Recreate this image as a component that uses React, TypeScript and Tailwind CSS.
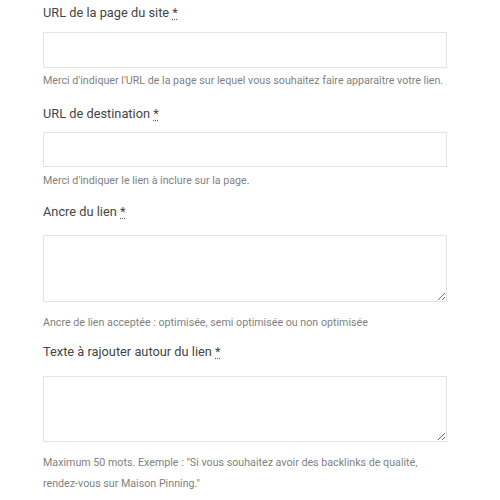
import React from "react";

function Label({ text }: { text: string }) {
  return (
    <div className="text-[12.8px] leading-[26px] text-[#454545]">
      {text}{" "}
      <abbr title="required" className="text-[#454545] underline decoration-dotted decoration-[#666] underline-offset-[2px]">*</abbr>
    </div>
  );
}

function Help({ children }: { children: React.ReactNode }) {
  return <div className="text-[10.7px] leading-[21px] text-[#7f7f7f]">{children}</div>;
}

export default function App() {
  return (
    <div className="w-[500px] h-[500px] bg-white overflow-hidden" style={{ fontFamily: "Roboto, 'Liberation Sans', sans-serif" }}>
      <div className="pl-[43px] pr-[53px]">
        <Label text="URL de la page du site" />
        <input className="mt-[6px] block w-full h-[36px] border border-[#e3e3e3] bg-white" />
        <div className="mt-[2px]"><Help>Merci d'indiquer l'URL de la page sur lequel vous souhaitez faire apparaître votre lien.</Help></div>
        <div className="mt-[10px]"><Label text="URL de destination" /></div>
        <input className="mt-[5px] block w-full h-[35px] border border-[#e3e3e3] bg-white" />
        <div className="mt-[3px]"><Help>Merci d'indiquer le lien à inclure sur la page.</Help></div>
        <div className="mt-[8px]"><Label text="Ancre du lien" /></div>
        <textarea className="mt-[10px] block w-full h-[67px] border border-[#e3e3e3] bg-white" />
        <div className="mt-[10px]"><Help>Ancre de lien acceptée : optimisée, semi optimisée ou non optimisée</Help></div>
        <div className="mt-[6px]"><Label text="Texte à rajouter autour du lien" /></div>
        <textarea className="mt-[11px] block w-full h-[66px] border border-[#e3e3e3] bg-white" />
        <div className="mt-[10px] pr-[20px]"><Help>Maximum 50 mots. Exemple : "Si vous souhaitez avoir des backlinks de qualité, rendez-vous sur Maison Pinning."</Help></div>
      </div>
    </div>
  );
}
